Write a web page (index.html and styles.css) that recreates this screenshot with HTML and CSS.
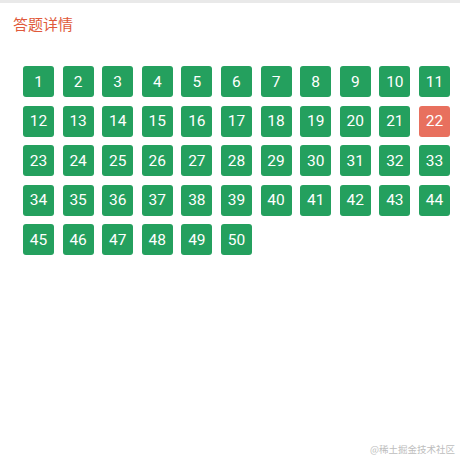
FILE: index.html
```html
<!DOCTYPE html>
<html lang="zh">
<head>
    <meta charset="UTF-8">
    <meta name="viewport" content="width=device-width, initial-scale=1.0">
    <title>答题详情</title>
    <link rel="stylesheet" href="styles.css">
</head>
<body>
<div class="page">
    <div class="top-bar"></div>
    <h2 class="title">答题详情</h2>
    <div class="answer-grid" id="answerGrid"></div>
</div>
<div class="watermark">@稀土掘金技术社区</div>

<script>
    const wrongList = [22];  // 答错的题号

    function renderGrid(total) {
        const grid = document.getElementById('answerGrid');
        grid.innerHTML = '';
        for (let i = 1; i <= total; i++) {
            const item = document.createElement('div');
            item.className = 'answer-item';
            if (wrongList.includes(i)) {
                item.classList.add('wrong');
            }
            item.textContent = i;
            grid.appendChild(item);
        }
    }

    renderGrid(50);
</script>
</body>
</html>
```

FILE: styles.css
```css
body {
    margin: 0;
    font-family: 'Noto Sans', 'Noto Sans CJK SC', sans-serif;
    background-color: #fff;
    width: 460px;
    height: 460px;
    overflow: hidden;
    position: relative;
}

.top-bar {
    height: 3px;
    background-color: #e9e9e9;
}

.title {
    margin: 0;
    padding: 10px 13px 0;
    font-size: 15px;
    font-weight: normal;
    line-height: 22px;
    color: #e0593a;
}

.answer-grid {
    display: grid;
    grid-template-columns: repeat(11, 31px);
    grid-auto-rows: 31px;
    column-gap: 8.6px;
    row-gap: 8.5px;
    padding: 31px 0 0 23px;
}

.answer-item {
    display: flex;
    justify-content: center;
    align-items: center;
    background-color: #24a05e;
    color: #fff;
    border-radius: 3px;
    font-family: 'Roboto', 'Noto Sans', sans-serif;
    font-size: 15.5px;
}

.answer-item.wrong {
    background-color: #e8705e;
}

.watermark {
    position: absolute;
    right: 5px;
    bottom: 4px;
    font-size: 9.5px;
    color: #bdbdbd;
    font-family: 'Noto Sans CJK SC', sans-serif;
}
```
